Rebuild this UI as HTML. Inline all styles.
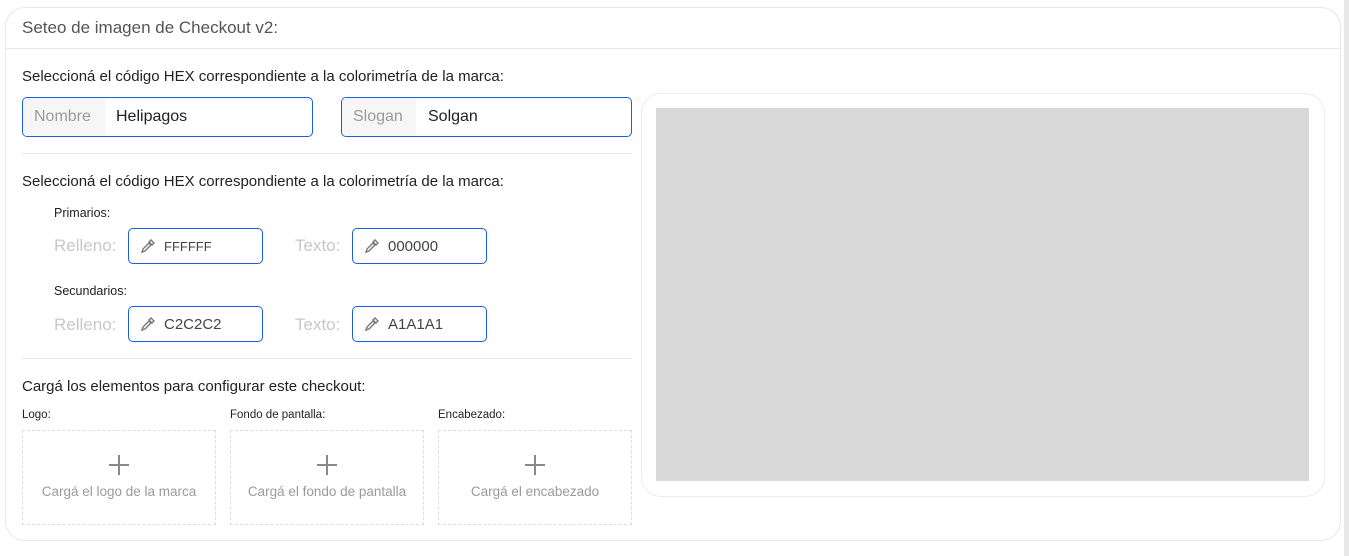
<!DOCTYPE html>
<html><head><meta charset="utf-8"><style>
*{box-sizing:border-box;margin:0;padding:0}
body{width:1349px;height:556px;background:#fff;font-family:"Liberation Sans",sans-serif;position:relative;overflow:hidden;color:#212121}
.sb{position:absolute;right:0;top:0;width:5px;height:556px;background:#e8e8e8}
.card{position:absolute;left:5px;top:7px;width:1336px;height:534px;border:1px solid #e6e6f5;border-radius:20px}
.hdr{position:absolute;left:0;top:0;right:0;height:41px;border-bottom:1px solid #e6e6f5}
.t{position:absolute;white-space:nowrap}
.inp{position:absolute;border:1px solid #1a5fe0;border-radius:5px;height:40px;background:#fff;overflow:hidden}
.pre{position:absolute;left:0;top:0;bottom:0;background:#f6f6f6;color:#9a9a9a;font-size:16px;line-height:38px;padding-left:11px}
.hex{position:absolute;border:1px solid #1a5fe0;border-radius:5px;height:36px;width:135px;font-size:15px;line-height:34px;color:#444}
.hex svg{position:absolute;left:11px;top:9px}
.hex span{position:absolute;left:35px;top:1px}
.lbl{position:absolute;color:#c8c8c8;font-size:17px}
hr{position:absolute;border:0;border-top:1px solid #e9e9ef;height:0}
.up{position:absolute;border:1px dashed #dcdcdc;width:194px;height:95px;top:430px;text-align:center;color:#9a9a9a;font-size:13.5px}
.up .p{position:absolute;left:86px;top:24px;width:20px;height:20px}
.up .p:before{content:"";position:absolute;left:9px;top:0;width:2px;height:20px;background:#888}
.up .p:after{content:"";position:absolute;top:9px;left:0;height:2px;width:20px;background:#888}
.up .c{position:absolute;left:0;right:0;top:53px}
.sm{position:absolute;font-size:11.5px;color:#222}
</style></head><body>
<div class="sb"></div>
<div class="card"><div class="hdr"></div></div>
<div class="t" style="left:22px;top:18px;font-size:17px;color:#555">Seteo de imagen de Checkout v2:</div>
<div class="t" style="left:22px;top:68px;font-size:15px">Seleccioná el código HEX correspondiente a la colorimetría de la marca:</div>
<div class="inp" style="left:22px;top:97px;width:291px"><div class="pre" style="width:82px">Nombre</div><div class="t" style="left:93px;top:10px;font-size:16px">Helipagos</div></div>
<div class="inp" style="left:341px;top:97px;width:291px"><div class="pre" style="width:74px">Slogan</div><div class="t" style="left:86px;top:10px;font-size:16px">Solgan</div></div>
<hr style="left:22px;top:153px;width:610px">
<div class="t" style="left:22px;top:173px;font-size:15px">Seleccioná el código HEX correspondiente a la colorimetría de la marca:</div>
<div class="t" style="left:54px;top:206px;font-size:12.5px">Primarios:</div>
<div class="lbl" style="left:54px;top:236px">Relleno:</div>
<div class="hex" style="left:128px;top:228px"><svg width="16" height="16" viewBox="0 0 16 16"><path d="M2 14l1-3 6-6 2 2-6 6zM9 4l2-2 3 3-2 2z" fill="none" stroke="#777" stroke-width="1.4"/></svg><span style="font-size:13px">FFFFFF</span></div>
<div class="lbl" style="left:295px;top:236px">Texto:</div>
<div class="hex" style="left:352px;top:228px"><svg width="16" height="16" viewBox="0 0 16 16"><path d="M2 14l1-3 6-6 2 2-6 6zM9 4l2-2 3 3-2 2z" fill="none" stroke="#777" stroke-width="1.4"/></svg><span>000000</span></div>
<div class="t" style="left:54px;top:284px;font-size:12.5px">Secundarios:</div>
<div class="lbl" style="left:54px;top:315px">Relleno:</div>
<div class="hex" style="left:128px;top:306px"><svg width="16" height="16" viewBox="0 0 16 16"><path d="M2 14l1-3 6-6 2 2-6 6zM9 4l2-2 3 3-2 2z" fill="none" stroke="#777" stroke-width="1.4"/></svg><span>C2C2C2</span></div>
<div class="lbl" style="left:295px;top:315px">Texto:</div>
<div class="hex" style="left:352px;top:306px"><svg width="16" height="16" viewBox="0 0 16 16"><path d="M2 14l1-3 6-6 2 2-6 6zM9 4l2-2 3 3-2 2z" fill="none" stroke="#777" stroke-width="1.4"/></svg><span>A1A1A1</span></div>
<hr style="left:22px;top:358px;width:610px">
<div class="t" style="left:22px;top:378px;font-size:15px">Cargá los elementos para configurar este checkout:</div>
<div class="sm" style="left:22px;top:409px">Logo:</div>
<div class="sm" style="left:230px;top:409px">Fondo de pantalla:</div>
<div class="sm" style="left:438px;top:409px">Encabezado:</div>
<div class="up" style="left:22px"><div class="p"></div><div class="c">Cargá el logo de la marca</div></div>
<div class="up" style="left:230px"><div class="p"></div><div class="c">Cargá el fondo de pantalla</div></div>
<div class="up" style="left:438px"><div class="p"></div><div class="c">Cargá el encabezado</div></div>
<div style="position:absolute;left:641px;top:93px;width:684px;height:404px;border:1px solid #ececf2;border-radius:20px"></div>
<div style="position:absolute;left:656px;top:108px;width:653px;height:373px;background:#d9d9d9"></div>
</body></html>
